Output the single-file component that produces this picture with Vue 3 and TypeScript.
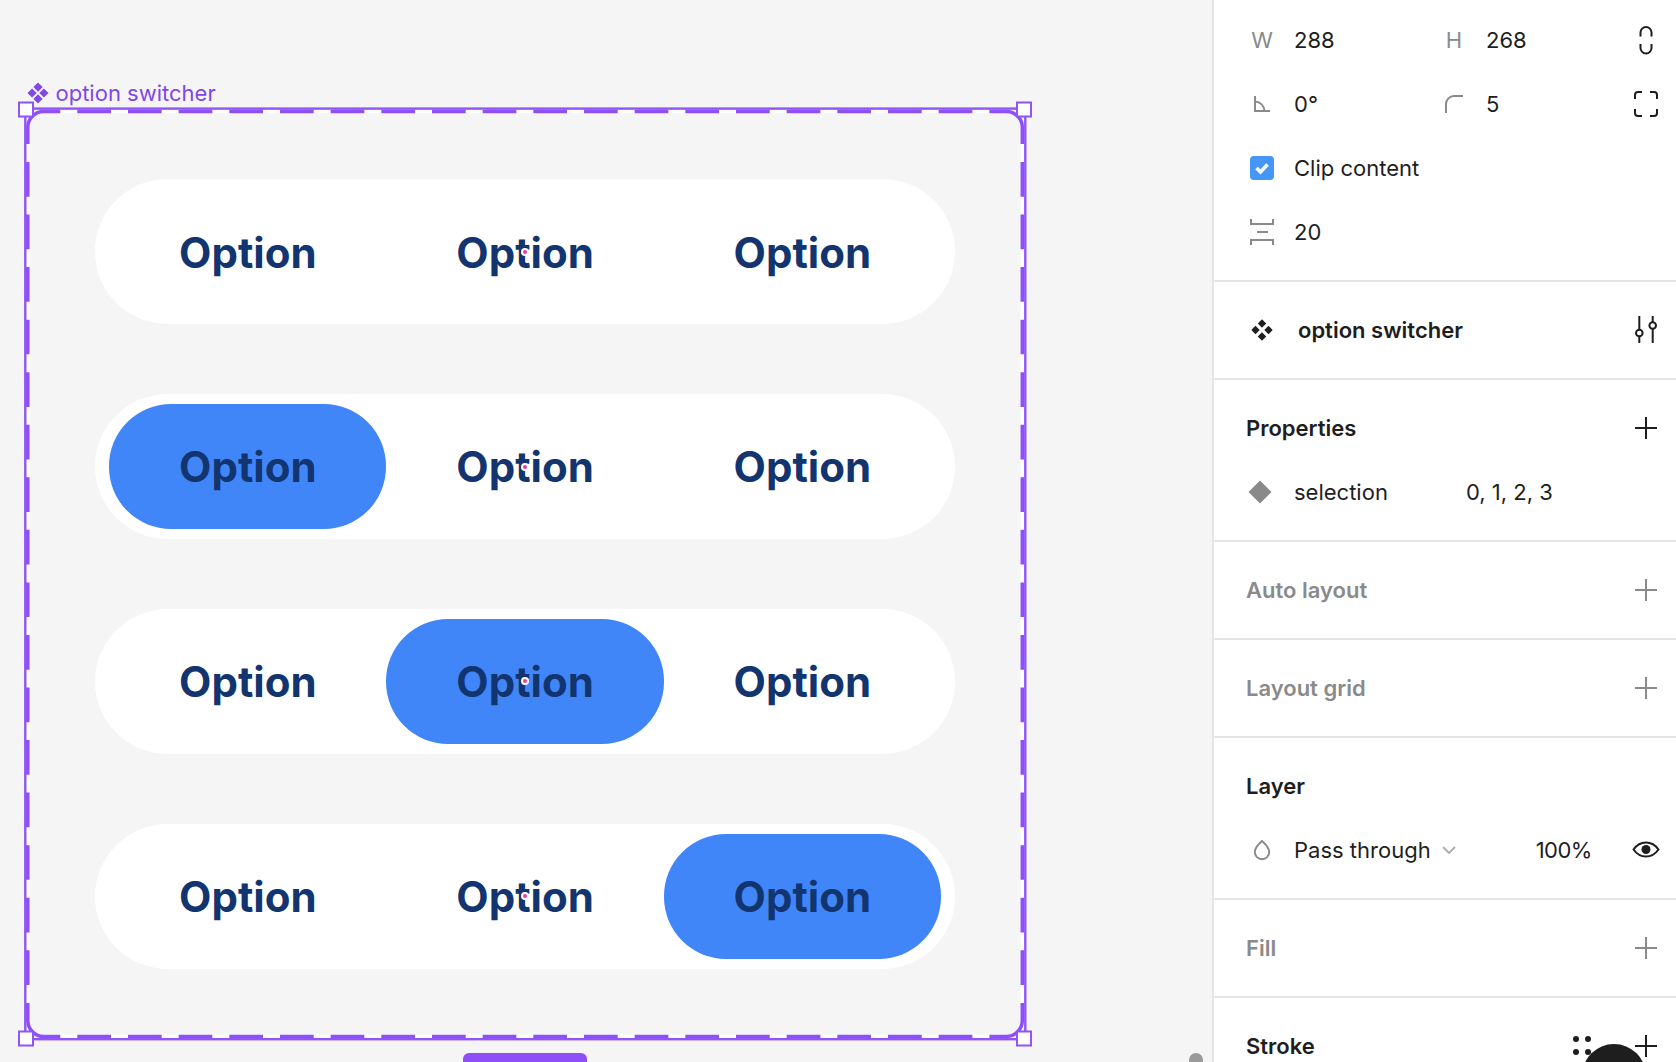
<script setup lang="ts">
const rows: number[] = [-1, 0, 1, 2]
const cols: number[] = [0, 1, 2]
const topDashes: number[] = Array.from({ length: 18 }, (_, i) => 77.3 + i * 50.67)
const sideDashes: number[] = Array.from({ length: 16 }, (_, i) => 162 + i * 52.55)
const plusSections = [
  { title: 'Auto layout', muted: true },
  { title: 'Layout grid', muted: true },
]
</script>

<template>
  <div class="app">
    <main class="canvas">
      <div class="label">
        <svg class="label-icon" width="22" height="22" viewBox="0 0 22 22">
          <path d="M11 0.5 15.6 5.1 11 9.7 6.4 5.1ZM5.1 6.4 9.7 11 5.1 15.6 0.5 11ZM16.9 6.4 21.5 11 16.9 15.6 12.3 11ZM11 12.3 15.6 16.9 11 21.5 6.4 16.9Z" fill="#8148e8" />
        </svg>
        <span>option switcher</span>
      </div>

      <section class="frame">
        <div v-for="sel in rows" :key="sel" class="switch">
          <div v-for="c in cols" :key="c" class="option" :class="{ selected: sel === c, center: c === 1 }">Option</div>
        </div>
      </section>

      <svg class="selection" width="1060" height="960" viewBox="0 0 1060 960">
        <g transform="translate(0 -100)">
          <rect x="27.8" y="111.5" width="994.5" height="925" rx="16" fill="none" stroke="#fff" stroke-width="3.4" />
          <rect x="25.3" y="108.6" width="1000" height="930.6" fill="none" stroke="#9054f8" stroke-width="2.4" />
          <g fill="none" stroke="#8f4ff8" stroke-width="3.5">
            <path d="M27.8 144V128A16 16 0 0 1 44 111.5H60.3" />
            <path d="M1022.3 144V128A16 16 0 0 0 1006 111.5H989.4" />
            <path d="M27.8 1003V1020A16 16 0 0 0 44 1036.5H60.3" />
            <path d="M1022.3 1003V1020A16 16 0 0 1 1006 1036.5H989.4" />
            <template v-for="x in topDashes" :key="x">
              <path v-if="x < 980" :d="`M${x} 111.5h33.7M${x} 1036.5h33.7`" />
            </template>
            <path v-for="y in sideDashes" :key="y" :d="`M27.8 ${y}v34.7M1022.3 ${y}v34.7`" />
          </g>
          <rect x="19" y="102.500" width="14" height="14" fill="#fff" stroke="#9054f8" stroke-width="2" />
          <rect x="1017" y="102.500" width="14" height="14" fill="#fff" stroke="#9054f8" stroke-width="2" />
          <rect x="19" y="1031.500" width="14" height="14" fill="#fff" stroke="#9054f8" stroke-width="2" />
          <rect x="1017" y="1031.500" width="14" height="14" fill="#fff" stroke="#9054f8" stroke-width="2" />
        </g>
      </svg>

      <div class="variant-button"></div>
      <div class="scroll-dot"></div>
    </main>

    <aside class="panel">
      <section class="section first">
        <div class="row">
          <span class="icon glyph">W</span>
          <span class="value">288</span>
          <span class="icon glyph">H</span>
          <span class="value">268</span>
          <svg class="icon end" width="32" height="32" viewBox="0 0 32 32" fill="none" stroke="#1e1e1e" stroke-width="2">
            <path d="M10.5 12.5V8.5a5.5 5.5 0 0 1 11 0v4M10.5 20v4a5.5 5.5 0 0 0 11 0v-4" />
          </svg>
        </div>
        <div class="row">
          <svg class="icon" width="32" height="32" viewBox="0 0 32 32" fill="none" stroke="#8a8a8a" stroke-width="2">
            <path d="M9 8V23H24M9 13.5C14.5 14 18 18 18.500 23" />
          </svg>
          <span class="value">0°</span>
          <svg class="icon" width="32" height="32" viewBox="0 0 32 32" fill="none" stroke="#8a8a8a" stroke-width="2">
            <path d="M8 25V16A8 8 0 0 1 16 8H25" />
          </svg>
          <span class="value">5</span>
          <svg class="icon end" width="32" height="32" viewBox="0 0 32 32" fill="none" stroke="#1e1e1e" stroke-width="2">
            <path d="M5 11V7a3 3 0 0 1 3-3h4M20 4h4a3 3 0 0 1 3 3v4M27 21v4a3 3 0 0 1-3 3h-4M12 28H8a3 3 0 0 1-3-3v-4" />
          </svg>
        </div>
        <div class="row">
          <svg class="icon" width="32" height="32" viewBox="0 0 32 32">
            <rect x="4" y="4" width="24" height="24" rx="4" fill="#4597f7" />
            <path d="M10.500 16 14.500 20 21.500 12.500" fill="none" stroke="#fff" stroke-width="3.600" />
          </svg>
          <span class="value wide">Clip content</span>
        </div>
        <div class="row">
          <svg class="icon" width="32" height="32" viewBox="0 0 32 32" fill="none" stroke="#8a8a8a" stroke-width="2">
            <path d="M5 3V8H27V3M5 29V24H27V29M11 16H22" />
          </svg>
          <span class="value wide">20</span>
        </div>
      </section>

      <section class="section">
        <div class="row">
          <svg class="icon" width="32" height="32" viewBox="0 0 32 32">
            <path d="M16 5.300 20.200 9.500 16 13.700 11.800 9.500ZM9.500 11.800 13.700 16 9.500 20.200 5.300 16ZM22.500 11.800 26.700 16 22.500 20.200 18.300 16ZM16 18.300 20.200 22.500 16 26.700 11.800 22.500Z" fill="#1e1e1e" />
          </svg>
          <span class="component-name">option switcher</span>
          <svg class="icon end" width="32" height="32" viewBox="0 0 32 32" fill="none" stroke="#1e1e1e" stroke-width="2">
            <path d="M9.300 2V15M9.300 22V29M22.700 2V8M22.700 15V29" />
            <circle cx="9.300" cy="19" r="3.300" />
            <circle cx="22.700" cy="11.500" r="3.300" />
          </svg>
        </div>
      </section>

      <section class="section">
        <div class="row">
          <span class="title">Properties</span>
          <span class="plus"></span>
        </div>
        <div class="row">
          <svg class="icon" width="32" height="32" viewBox="0 0 32 32">
            <path d="M14 4.500 25.500 16 14 27.500 2.500 16Z" fill="#8a8a8a" />
          </svg>
          <span class="prop-name">selection</span>
          <span>0, 1, 2, 3</span>
        </div>
      </section>

      <section v-for="s in plusSections" :key="s.title" class="section">
        <div class="row">
          <span class="title muted">{{ s.title }}</span>
          <span class="plus muted"></span>
        </div>
      </section>

      <section class="section">
        <div class="row">
          <span class="title">Layer</span>
        </div>
        <div class="row">
          <svg class="icon" width="32" height="32" viewBox="0 0 32 32" fill="none" stroke="#8a8a8a" stroke-width="2">
            <path d="M16 7C12 10.500 8.800 14 8.800 18a7.200 7.200 0 0 0 14.400 0C23.200 14 20 10.500 16 7Z" />
          </svg>
          <span class="blend">Pass through</span>
          <svg class="chevron" width="14" height="8" viewBox="0 0 14 8" fill="none" stroke="#b0b0b0" stroke-width="2">
            <path d="M1 1 7 7 13 1" />
          </svg>
          <span class="opacity">100%</span>
          <svg class="icon end" width="32" height="32" viewBox="0 0 32 32">
            <path d="M3.500 15.500C7 10.500 11 8.500 16 8.500S25 10.500 28.500 15.500C25 20.500 21 22.500 16 22.500S7 20.500 3.500 15.500Z" fill="none" stroke="#1e1e1e" stroke-width="2" />
            <circle cx="16" cy="15.500" r="4.500" fill="#1e1e1e" />
          </svg>
        </div>
      </section>

      <section class="section">
        <div class="row">
          <span class="title muted">Fill</span>
          <span class="plus muted"></span>
        </div>
      </section>

      <section class="section last">
        <div class="row">
          <span class="title">Stroke</span>
          <span class="plus"></span>
        </div>
      </section>

      <div class="grip"><i></i><i></i><i></i><i></i></div>
      <div class="avatar"></div>
    </aside>
  </div>
</template>

<style scoped>
.app {
  display: flex;
  width: 1676px;
  height: 1062px;
  overflow: hidden;
  font-family: Inter, "Liberation Sans", sans-serif;
  font-size: 22px;
  color: #1e1e1e;
}
.canvas {
  position: relative;
  flex: 1;
  background: #f5f5f5;
  overflow: hidden;
}
.label {
  position: absolute;
  left: 26.500px;
  top: 80px;
  display: flex;
  align-items: center;
  gap: 7px;
  height: 26px;
  color: #8148e8;
}
.label-icon {
  flex: none;
}
.frame {
  position: absolute;
  left: 26px;
  top: 109px;
  width: 998px;
  height: 930px;
  box-sizing: border-box;
  padding: 70px 69px 70px 69.200px;
  display: flex;
  flex-direction: column;
  gap: 69.7px;
}
.switch {
  display: flex;
  height: 145.5px;
  box-sizing: border-box;
  padding: 10.4px 14px;
  background: #fff;
  border-radius: 72.75px;
}
.option {
  position: relative;
  flex: 1;
  display: flex;
  align-items: center;
  justify-content: center;
  box-sizing: border-box;
  padding-top: 0.800px;
  border-radius: 62px;
  font-size: 42px;
  font-weight: 700;
  color: #13356f;
}
.option.selected {
  background: #4086f8;
}
.option.center::after {
  content: "";
  position: absolute;
  left: 50%;
  top: 50%;
  width: 4px;
  height: 4px;
  margin: -2px 0 0 -2px;
  border-radius: 50%;
  background: #f0389f;
  box-shadow: 0 0 0 2px #fff;
}
.selection {
  position: absolute;
  left: 0;
  top: 100px;
  pointer-events: none;
}
.variant-button {
  position: absolute;
  left: 463px;
  top: 1053px;
  width: 124px;
  height: 40px;
  background: #8f4ff8;
  border-radius: 6px;
}
.scroll-dot {
  position: absolute;
  left: 1189px;
  top: 1053px;
  width: 14px;
  height: 14px;
  border-radius: 50%;
  background: #9a9a9a;
}
.panel {
  position: relative;
  flex: none;
  width: 462px;
  box-sizing: content-box;
  border-left: 2px solid #e6e6e6;
  background: #fff;
  overflow: hidden;
}
.section {
  box-sizing: border-box;
  padding: 16px 14px 16px 32px;
  border-bottom: 2px solid #e6e6e6;
}
.section.first {
  padding-top: 8px;
}
.section.last {
  border-bottom: 0;
}
.row {
  display: flex;
  align-items: center;
  height: 64px;
}
.icon {
  flex: none;
  width: 32px;
  height: 32px;
  margin-right: 16px;
}
.glyph {
  display: flex;
  align-items: center;
  justify-content: center;
  color: #8a8a8a;
}
.value {
  width: 144px;
  flex: none;
}
.value.wide {
  width: auto;
}
.end {
  margin: 0 0 0 auto;
}
.title {
  font-weight: 600;
}
.muted {
  color: #8a8a8a;
}
.plus {
  position: relative;
  width: 32px;
  height: 32px;
  margin-left: auto;
  --plus: #1e1e1e;
  background:
    linear-gradient(var(--plus), var(--plus)) center / 22px 2px no-repeat,
    linear-gradient(var(--plus), var(--plus)) center / 2px 22px no-repeat;
}
.plus.muted {
  --plus: #8a8a8a;
}
.component-name {
  margin-left: 4px;
  font-weight: 600;
}
.prop-name {
  width: 172px;
}
.blend {
  width: auto;
}
.chevron {
  margin-left: 11px;
}
.opacity {
  margin-left: 80px;
  letter-spacing: -0.500px;
}
.grip {
  position: absolute;
  left: 359px;
  top: 1036px;
  display: grid;
  grid-template-columns: 6px 6px;
  gap: 7px 6px;
}
.grip i {
  width: 6px;
  height: 6px;
  border-radius: 50%;
  background: #1e1e1e;
}
.avatar {
  position: absolute;
  left: 368px;
  top: 1044px;
  width: 64px;
  height: 64px;
  border-radius: 50%;
  background: #1e1e1e;
}
</style>

<style>
html,
body {
  margin: 0;
  background: #f5f5f5;
}
</style>
